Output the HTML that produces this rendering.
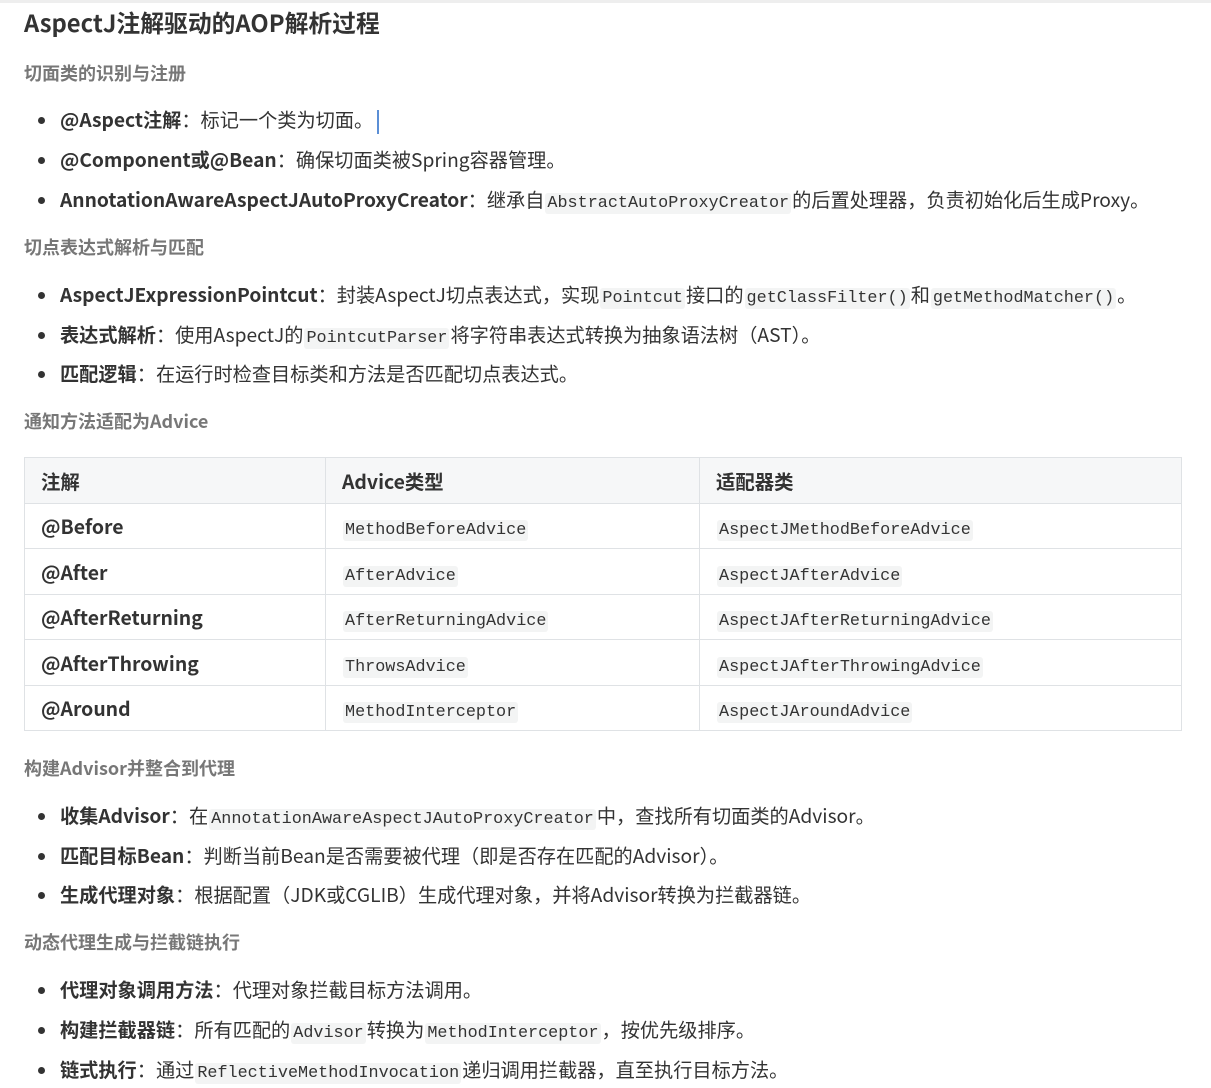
<!DOCTYPE html>
<html><head><meta charset="utf-8"><style>
body{margin:0;width:1211px;height:1080px;background:#fff;font-family:"Noto Sans CJK SC","Liberation Sans",sans-serif;color:#333;overflow:hidden;position:relative}
.topbar{position:absolute;left:0;top:0;width:1211px;height:3px;background:#eee}
h1{position:absolute;left:24px;top:4px;margin:0;font-size:23.8px;font-weight:bold;color:#333;line-height:36px}
.h{position:absolute;left:24px;margin:0;font-size:18px;font-weight:bold;color:#777;line-height:26px}
.li{position:absolute;left:60px;font-size:19.2px;line-height:28px;white-space:nowrap}
.li:before{content:"";position:absolute;left:-22px;top:12px;width:7px;height:7px;border-radius:50%;background:#333}
b{font-weight:bold}
.c{margin-right:0}
code{font-family:"Liberation Mono",monospace;font-size:16.8px;background:#f3f4f4;border-radius:3px;padding:1px 2px;margin:0 1px}
table{position:absolute;left:24px;top:457px;width:1158px;border-collapse:collapse;font-size:19.4px}
td,th{border:1px solid #dfe2e5;height:44.5px;padding:0 16px;text-align:left;vertical-align:middle}
th{background:#f6f7f8;font-weight:bold}
td:first-child{font-weight:bold}
td code{font-size:16.8px}
.cur{display:inline-block;width:2px;height:24px;background:#5b8fd6;vertical-align:middle;margin-left:4px}
</style></head><body>
<div class="topbar"></div>
<h1>AspectJ注解驱动的AOP解析过程</h1>
<div class="h" style="top:60px">切面类的识别与注册</div>
<div class="li" style="top:105px"><b>@Aspect注解</b><span class="c">：</span>标记一个类为切面。<span class="cur"></span></div>
<div class="li" style="top:145px"><b>@Component或@Bean</b><span class="c">：</span>确保切面类被Spring容器管理。</div>
<div class="li" style="top:185px"><b>AnnotationAwareAspectJAutoProxyCreator</b><span class="c">：</span>继承自<code>AbstractAutoProxyCreator</code>的后置处理器，负责初始化后生成Proxy。</div>
<div class="h" style="top:234px">切点表达式解析与匹配</div>
<div class="li" style="top:280px"><b>AspectJExpressionPointcut</b><span class="c">：</span>封装AspectJ切点表达式，实现<code>Pointcut</code>接口的<code>getClassFilter()</code>和<code>getMethodMatcher()</code>。</div>
<div class="li" style="top:320px"><b>表达式解析</b><span class="c">：</span>使用AspectJ的<code>PointcutParser</code>将字符串表达式转换为抽象语法树（AST）。</div>
<div class="li" style="top:359px"><b>匹配逻辑</b><span class="c">：</span>在运行时检查目标类和方法是否匹配切点表达式。</div>
<div class="h" style="top:408px">通知方法适配为Advice</div>
<table>
<tr><th style="width:268px">注解</th><th style="width:341px">Advice类型</th><th>适配器类</th></tr>
<tr><td>@Before</td><td><code>MethodBeforeAdvice</code></td><td><code>AspectJMethodBeforeAdvice</code></td></tr>
<tr><td>@After</td><td><code>AfterAdvice</code></td><td><code>AspectJAfterAdvice</code></td></tr>
<tr><td>@AfterReturning</td><td><code>AfterReturningAdvice</code></td><td><code>AspectJAfterReturningAdvice</code></td></tr>
<tr><td>@AfterThrowing</td><td><code>ThrowsAdvice</code></td><td><code>AspectJAfterThrowingAdvice</code></td></tr>
<tr><td>@Around</td><td><code>MethodInterceptor</code></td><td><code>AspectJAroundAdvice</code></td></tr>
</table>
<div class="h" style="top:755px">构建Advisor并整合到代理</div>
<div class="li" style="top:801px"><b>收集Advisor</b><span class="c">：</span>在<code>AnnotationAwareAspectJAutoProxyCreator</code>中，查找所有切面类的Advisor。</div>
<div class="li" style="top:841px"><b>匹配目标Bean</b><span class="c">：</span>判断当前Bean是否需要被代理（即是否存在匹配的Advisor）。</div>
<div class="li" style="top:880px"><b>生成代理对象</b><span class="c">：</span>根据配置（JDK或CGLIB）生成代理对象，并将Advisor转换为拦截器链。</div>
<div class="h" style="top:929px">动态代理生成与拦截链执行</div>
<div class="li" style="top:975px"><b>代理对象调用方法</b><span class="c">：</span>代理对象拦截目标方法调用。</div>
<div class="li" style="top:1015px"><b>构建拦截器链</b><span class="c">：</span>所有匹配的<code>Advisor</code>转换为<code>MethodInterceptor</code>，按优先级排序。</div>
<div class="li" style="top:1055px"><b>链式执行</b><span class="c">：</span>通过<code>ReflectiveMethodInvocation</code>递归调用拦截器，直至执行目标方法。</div>
</body></html>
